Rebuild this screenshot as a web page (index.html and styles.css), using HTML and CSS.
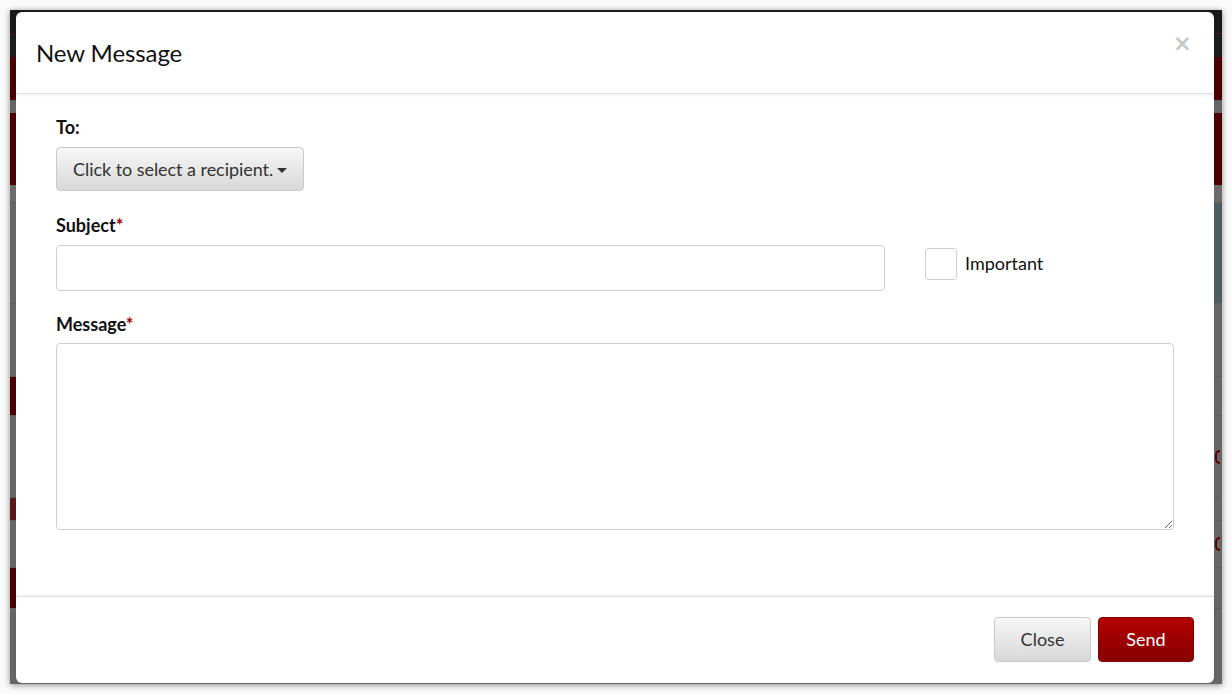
FILE: index.html
```html
<!DOCTYPE html>
<html lang="en">
<head>
<meta charset="utf-8">
<title>New Message</title>
<link rel="stylesheet" href="styles.css">
</head>
<body>
<div class="frame">
  <div class="page">
    <div class="band band-top"></div>
    <div class="band band-line"></div>
    <div class="band band-top2"></div>
    <div class="band band-red h43"></div>
    <div class="band band-gray h13"></div>
    <div class="band band-red h72"></div>
    <div class="band band-gray2 h17"></div>
    <div class="band band-gray h101"><span class="blue-block"></span></div>
    <div class="band band-gray h73"></div>
    <div class="band band-gray h39"><span class="left-red"></span></div>
    <div class="band band-gray h82"><span class="right-mark"></span></div>
    <div class="band band-gray h23"><span class="left-brown"></span></div>
    <div class="band band-gray h47"><span class="right-mark"></span></div>
    <div class="band band-gray h41"><span class="left-red"></span></div>
    <div class="band band-gray h76"></div>
  </div>

  <div class="modal">
    <div class="modal-header">
      <h1 class="modal-title">New Message</h1>
      <span class="modal-close">×</span>
    </div>
    <div class="modal-body">
      <div class="field">
        <label class="label">To:</label>
        <button class="select-btn" type="button">Click to select a recipient. <span class="caret"></span></button>
      </div>
      <div class="field">
        <label class="label">Subject<span class="req">*</span></label>
        <div class="subject-row">
          <input class="text-input" type="text">
          <label class="check">
            <span class="check-box"></span>
            <span class="check-text">Important</span>
          </label>
        </div>
      </div>
      <div class="field field-msg">
        <label class="label">Message<span class="req">*</span></label>
        <textarea class="text-area"></textarea>
      </div>
    </div>
    <div class="modal-footer">
      <button class="btn btn-default" type="button">Close</button>
      <button class="btn btn-primary" type="button">Send</button>
    </div>
  </div>
</div>
</body>
</html>
```
FILE: styles.css
```css
* { box-sizing: border-box; }

html, body {
  margin: 0;
  padding: 0;
  background: #fafafa;
  font-family: Lato, "Liberation Sans", sans-serif;
}

body {
  padding: 10px 10px 0 10px;
  width: 1232px;
  height: 694px;
  overflow: hidden;
}

.frame {
  position: relative;
  width: 1212px;
  height: 674px;
  background: #666;
  box-shadow: 0 1px 6px rgba(0, 0, 0, 0.45);
  overflow: hidden;
}

.page {
  display: flex;
  flex-direction: column;
}

.band {
  position: relative;
  flex: none;
  display: flex;
  align-items: center;
  justify-content: space-between;
  overflow: hidden;
}

.band-top { height: 23px; background: #1a1a1a; }
.band-line { height: 1px; background: #4e1212; }
.band-top2 { height: 23px; background: #1d1d1d; }
.band-red { background: #4a0000; }
.band-gray { background: #666; border-top: 1px solid #5e5e5e; }
.band-gray2 { background: #6c6c6c; }

.h13 { height: 13px; }
.h17 { height: 17px; }
.h23 { height: 23px; }
.h39 { height: 39px; }
.h41 { height: 41px; }
.h43 { height: 43px; }
.h47 { height: 47px; }
.h72 { height: 72px; }
.h73 { height: 73px; }
.h76 { height: 76px; }
.h82 { height: 82px; }
.h101 { height: 101px; }

.blue-block {
  margin-left: auto;
  width: 200px;
  height: 100%;
  background: #4e5d64;
}
.left-red {
  width: 200px;
  height: 100%;
  background: #4a0000;
}
.left-brown {
  width: 200px;
  height: 100%;
  background: #5a1818;
}
.right-mark {
  margin-left: auto;
  margin-right: 2px;
  width: 5px;
  height: 14px;
  border: 2px solid #5a0000;
  border-right: none;
  border-radius: 7px 0 0 7px;
}

/* ---------- modal ---------- */
.modal {
  position: absolute;
  left: 6px;
  top: 2px;
  width: 1198px;
  height: 671px;
  background: #fff;
  border-radius: 6px;
  display: flex;
  flex-direction: column;
}

.modal-header {
  flex: none;
  height: 82px;
  display: flex;
  justify-content: space-between;
  align-items: flex-start;
  padding: 0 21px;
  border-bottom: 1px solid #e0e0e0;
  box-shadow: 0 1px 3px rgba(0, 0, 0, 0.08);
}

.modal-title {
  margin: 26px 0 0 -1px;
  font-size: 24px;
  font-weight: 400;
  line-height: 30px;
  color: #111;
  letter-spacing: -0.1px;
}

.modal-close {
  margin-top: 19px;
  margin-right: 1px;
  font-size: 23px;
  font-weight: 700;
  line-height: 24px;
  color: #c8c8c8;
  font-family: "DejaVu Sans", sans-serif;
}

.modal-body {
  flex: 1;
  padding: 22px 40px 0 40px;
}

.field {
  display: flex;
  flex-direction: column;
  align-items: flex-start;
  margin-bottom: 23px;
}

.label {
  font-size: 18px;
  font-weight: 700;
  line-height: 22px;
  color: #111;
  margin-bottom: 9px;
}

.field-msg { margin-top: -1px; }
.field-msg .label { margin-bottom: 8px; }

.req { color: #990000; }

.select-btn {
  height: 44px;
  padding: 0 16px 0 16px;
  font-family: inherit;
  font-size: 18px;
  color: #333;
  background: linear-gradient(#f7f7f7, #d8d8d8);
  border: 1px solid #c9c9c9;
  border-radius: 4px;
  display: flex;
  align-items: center;
  gap: 4px;
  letter-spacing: -0.05px;
}

.caret {
  width: 0;
  height: 0;
  border-left: 5px solid transparent;
  border-right: 5px solid transparent;
  border-top: 5px solid #333;
  margin-top: 2px;
}

.subject-row {
  display: flex;
  align-items: flex-start;
  gap: 40px;
  width: 100%;
}

.text-input {
  width: 829px;
  height: 46px;
  border: 1px solid #cfcfcf;
  border-radius: 4px;
  font-family: inherit;
  font-size: 18px;
  padding: 0 12px;
  outline: none;
}

.check {
  display: flex;
  align-items: center;
  gap: 8px;
  margin-top: 3px;
}

.check-box {
  width: 32px;
  height: 32px;
  border: 1px solid #cfcfcf;
  border-radius: 3px;
  background: #fff;
}

.check-text {
  font-size: 18px;
  line-height: 22px;
  margin-top: -3px;
  color: #111;
}

.text-area {
  width: 1118px;
  height: 187px;
  border: 1px solid #cfcfcf;
  border-radius: 4px;
  font-family: inherit;
  font-size: 18px;
  resize: both;
  outline: none;
}

.modal-footer {
  flex: none;
  height: 87px;
  display: flex;
  justify-content: flex-end;
  align-items: flex-start;
  gap: 7px;
  padding: 20px 20px 0 0;
  border-top: 1px solid #e0e0e0;
  box-shadow: 0 -1px 3px rgba(0, 0, 0, 0.08);
}

.btn {
  height: 45px;
  font-family: inherit;
  font-size: 18px;
  border-radius: 4px;
  padding: 0 0 2px 0;
}

.btn-default {
  width: 97px;
  color: #333;
  background: linear-gradient(#f7f7f7, #d8d8d8);
  border: 1px solid #c9c9c9;
}

.btn-primary {
  width: 96px;
  color: #fff;
  background: linear-gradient(#b30000, #880000);
  border: 1px solid #8a0000;
}
```
